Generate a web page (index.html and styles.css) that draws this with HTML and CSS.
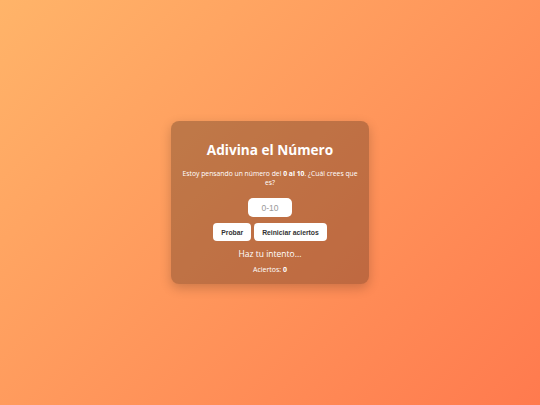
FILE: index.html
```html
<!DOCTYPE html>
<html lang="es">
<head>
    <meta charset="UTF-8">
    <meta name="viewport" content="width=device-width, initial-scale=1.0">
    <title>Adivina el Número</title>
    <link rel="stylesheet" href="styles.css">
</head>
<body>

    <div class="card">
        <h1>Adivina el Número</h1>
        <p class="intro">Estoy pensando un número del <strong>0 al 10</strong>. ¿Cuál crees que es?</p>

        <input type="number" id="guess" placeholder="0-10">

        <div class="buttons">
            <button id="btn">Probar</button>
            <button id="reset">Reiniciar aciertos</button>
        </div>

        <p class="message" id="message">Haz tu intento...</p>
        <p class="score">Aciertos: <strong id="score">0</strong></p>
    </div>

</body>
</html>
```

FILE: styles.css
```css
html, body {
    height: 100%;
}

body {
    font-family: "Open Sans", Arial, sans-serif;
    margin: 0;
    display: flex;
    align-items: center;
    justify-content: center;
    background: linear-gradient(135deg, #ffb469, #ff7a4e);
    color: #fff;
}

.card {
    width: 198px;
    box-sizing: border-box;
    padding: 19px 10px 10px;
    border-radius: 8px;
    background: rgba(0, 0, 0, 0.25);
    box-shadow: 0 4px 12px rgba(0, 0, 0, 0.2);
    text-align: center;
}

.card h1 {
    font-size: 13.6px;
    margin: 0 0 10px;
}

.intro {
    font-size: 6.8px;
    line-height: 9.5px;
    margin: 0 0 6px;
}

#guess {
    width: 44px;
    height: 19px;
    box-sizing: border-box;
    padding: 0 4px;
    border: none;
    border-radius: 5px;
    font-family: Arial, sans-serif;
    font-size: 8.5px;
    text-align: center;
    outline: none;
    -moz-appearance: textfield;
}

#guess::-webkit-inner-spin-button,
#guess::-webkit-outer-spin-button {
    -webkit-appearance: none;
    margin: 0;
}

#guess::placeholder {
    color: #999;
}

.buttons {
    display: flex;
    justify-content: center;
    gap: 3px;
    margin-top: 6px;
}

.buttons button {
    height: 18px;
    padding: 0 8px;
    border: none;
    border-radius: 4px;
    background: #fff;
    color: #333;
    font-family: Arial, sans-serif;
    font-weight: bold;
    font-size: 6.8px;
}

.message {
    font-size: 8.5px;
    margin: 7px 0 0;
}

.score {
    font-size: 7px;
    margin: 6px 0 0;
}
```
